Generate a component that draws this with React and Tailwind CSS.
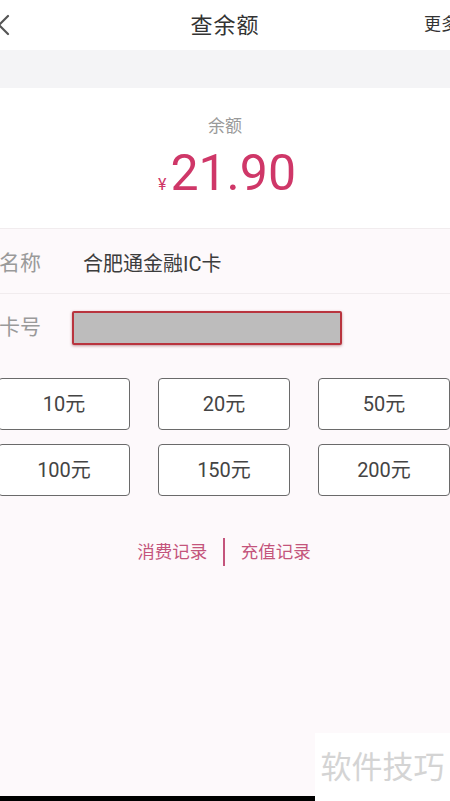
import React from 'react';

const amounts = ['10元', '20元', '50元', '100元', '150元', '200元'];

const App = () => {
  return (
    <div
      className="relative w-[450px] h-[801px] overflow-hidden flex flex-col bg-[#fdf9fb]"
      style={{ fontFamily: 'Roboto, "Noto Sans CJK SC", sans-serif' }}
    >
      {/* Header */}
      <div className="h-[50px] flex items-center bg-white shrink-0">
        <div className="w-[80px] flex items-center">
          <svg width="14" height="22" viewBox="0 0 14 22" className="-ml-[4px]">
            <path d="M12 2 L3 11 L12 20" fill="none" stroke="#555" strokeWidth="2.2" strokeLinecap="round" strokeLinejoin="round" />
          </svg>
        </div>
        <div className="flex-1 text-center text-[22px] text-[#333] tracking-[1px]">查余额</div>
        <div className="w-[80px] overflow-hidden whitespace-nowrap pl-[54px] text-[17px] text-[#333]">更多</div>
      </div>

      {/* Gray band */}
      <div className="h-[38px] bg-[#f4f4f6] shrink-0"></div>

      {/* Balance */}
      <div className="h-[140px] bg-white flex flex-col items-center shrink-0">
        <div className="mt-[27px] text-[17px] leading-[22px] text-[#9a9a9a]">余额</div>
        <div className="mt-[6px] ml-[4px] flex items-baseline text-[#cf3768]">
          <span className="text-[16px] mr-[4px]">¥</span>
          <span className="text-[50px] leading-[60px]">21.90</span>
        </div>
      </div>

      {/* Info rows */}
      <div className="h-[66px] pt-[5px] flex items-center border-t border-b border-[#f1ecee] shrink-0">
        <span className="w-[84px] -ml-[1px] text-[21px] text-[#9a9a9a]">名称</span>
        <span className="text-[20px] text-[#3c3c3c]">合肥通金融IC卡</span>
      </div>
      <div className="h-[66px] pt-[2px] flex items-center shrink-0">
        <span className="w-[73px] -ml-[1px] text-[21px] text-[#9a9a9a]">卡号</span>
        <div className="w-[270px] h-[34px] bg-[#bdbcbc] border-2 border-[#b9343e] rounded-[2px] shadow-[0_1px_3px_rgba(120,20,30,0.45)]"></div>
      </div>

      {/* Amount buttons */}
      <div className="mt-[18px] -ml-[2px] w-[452px] grid grid-cols-3 gap-x-[28px] gap-y-[14px] shrink-0">
        {amounts.map((a) => (
          <button
            key={a}
            className="h-[52px] border-[1.5px] border-[#6a6a6a] rounded-[4px] bg-white text-[20px] text-[#444] flex items-center justify-center"
          >
            {a}
          </button>
        ))}
      </div>

      {/* Records links */}
      <div className="mt-[42px] h-[28px] flex items-center justify-center text-[17.5px] text-[#c4557c] shrink-0">
        <span className="ml-[-2px]">消费记录</span>
        <span className="mx-[16px] w-[1.5px] h-[28px] bg-[#c4557c]"></span>
        <span>充值记录</span>
      </div>

      <div className="flex-1"></div>

      {/* Bottom bar */}
      <div className="h-[5px] w-[315px] bg-black shrink-0"></div>

      {/* Watermark */}
      <div className="absolute right-0 bottom-0 w-[135px] h-[68px] bg-white flex items-center justify-center text-[31px] text-[#d4d4d4] pt-[2px]">
        软件技巧
      </div>
    </div>
  );
};

export default App;
